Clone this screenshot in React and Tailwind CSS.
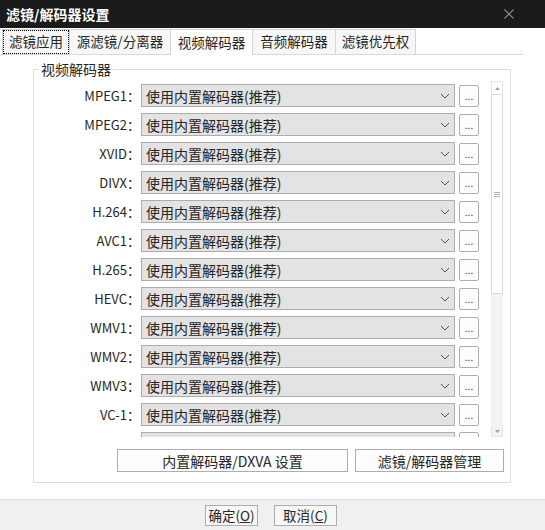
import React from "react";

const codecs = ["MPEG1", "MPEG2", "XVID", "DIVX", "H.264", "AVC1", "H.265", "HEVC", "WMV1", "WMV2", "WMV3", "VC-1"];

const tabs = [
  { label: "滤镜应用", w: "w-[67px]", focus: true },
  { label: "源滤镜/分离器", w: "w-[101px]" },
  { label: "视频解码器", w: "w-[82px]", active: true },
  { label: "音频解码器", w: "w-[83px]" },
  { label: "滤镜优先权", w: "w-[81px]", last: true },
];

function Chevron() {
  return (
    <svg width="10" height="6" viewBox="0 0 10 6">
      <path d="M1 1 L5 5 L9 1" fill="none" stroke="#555" strokeWidth="1" />
    </svg>
  );
}

function Row({ name }) {
  return (
    <div className="flex items-center h-[23px] shrink-0">
      <div className="w-[106px] text-right text-[13px] leading-none">{name}：</div>
      <div className="ml-[1px] w-[314px] h-[23px] bg-[#e3e3e3] border border-[#adadad] flex items-center justify-between pl-[4px] pr-[4px] text-[14px] leading-none">
        <span>使用内置解码器(推荐)</span>
        <Chevron />
      </div>
      <div className="ml-[4px] w-[20px] h-[22px] bg-[#fdfdfd] border border-[#adadad] rounded-[2px] flex items-end justify-center pb-[5px] text-[10px] leading-none text-[#333]">
        ...
      </div>
    </div>
  );
}

function PartialRow() {
  return (
    <div className="flex items-start h-[23px] shrink-0">
      <div className="w-[106px]" />
      <div className="ml-[1px] w-[314px] h-[23px] bg-[#e3e3e3] border border-[#adadad]" />
      <div className="ml-[4px] w-[20px] h-[22px] bg-[#fdfdfd] border border-[#adadad] rounded-[2px]" />
    </div>
  );
}

export default function App() {
  return (
    <div className="w-[545px] h-[530px] bg-white flex flex-col overflow-hidden text-[#262626] font-['Noto_Sans_CJK_SC','Noto_Sans',sans-serif]">
      {/* title bar */}
      <div className="h-[28px] shrink-0 bg-[#1b1b1b] flex items-center justify-between pl-[6px] pr-[31px]">
        <span className="text-white text-[14px] font-bold leading-none">滤镜/解码器设置</span>
        <svg width="10" height="10" viewBox="0 0 10 10">
          <path d="M0.5 0.5 L9.5 9.5 M9.5 0.5 L0.5 9.5" stroke="#8f8f8f" strokeWidth="1.1" />
        </svg>
      </div>

      {/* tabs */}
      <div className="h-[27px] shrink-0 pl-[2px] mr-[22px] flex items-end border-b border-[#d9d9d9]">
        {tabs.map((t) => (
          <div
            key={t.label}
            className={`${t.w} h-[25px] border-t border-l border-[#d5d5d5] ${t.last ? "border-r" : ""} ${
              t.active ? "bg-white h-[26px] -mb-px" : "bg-[#f7f7f7]"
            } flex items-center justify-center text-[13.5px] leading-none`}
          >
            {t.focus ? (
              <span className="w-full h-full border border-dotted border-black flex items-center justify-center">
                {t.label}
              </span>
            ) : (
              t.label
            )}
          </div>
        ))}
      </div>

      {/* content */}
      <div className="flex-1 flex flex-col">
        <div className="mt-[14px] ml-[33px] w-[478px] h-[414px] border border-[#dcdcdc] relative">
          <div className="absolute -top-[10px] left-[5px] px-[2px] bg-white text-[14px] leading-[18px]">视频解码器</div>
          <div className="pt-[11px] flex flex-col">
            <div className="flex h-[356px]">
              <div className="w-[445px] h-full overflow-hidden pt-[3px] flex flex-col gap-[6px]">
                {codecs.map((c) => (
                  <Row key={c} name={c} />
                ))}
                <PartialRow />
              </div>
              <div className="ml-[12px] w-[12px] h-full flex flex-col">
                <div className="h-[13px] flex items-center justify-center border border-[#e4e4e4] border-b-0">
                  <svg width="5" height="3" viewBox="0 0 5 3">
                    <path d="M0 3 L2.5 0 L5 3 Z" fill="#a0a0a0" />
                  </svg>
                </div>
                <div className="h-[200px] border border-[#d8d8d8] bg-white flex items-center justify-center">
                  <svg width="6" height="5" viewBox="0 0 6 5">
                    <path d="M0 0.5 H6 M0 2.5 H6 M0 4.5 H6" stroke="#b0b0b0" strokeWidth="1" />
                  </svg>
                </div>
                <div className="flex-1 bg-[#f3f3f3]" />
                <div className="h-[11px] flex items-center justify-center border border-[#e4e4e4] border-t-0 bg-[#f3f3f3]">
                  <svg width="5" height="3" viewBox="0 0 5 3">
                    <path d="M0 0 L2.5 3 L5 0 Z" fill="#a0a0a0" />
                  </svg>
                </div>
              </div>
            </div>
            <div className="mt-[12px] ml-[83px] flex gap-[7px]">
              <div className="w-[231px] h-[23px] bg-[#fdfdfd] border border-[#adadad] flex items-center justify-center text-[14px] leading-none">
                内置解码器/DXVA 设置
              </div>
              <div className="w-[149px] h-[23px] bg-[#fdfdfd] border border-[#adadad] flex items-center justify-center text-[14px] leading-none">
                滤镜/解码器管理
              </div>
            </div>
          </div>
        </div>
      </div>

      {/* footer */}
      <div className="h-[31px] shrink-0 border-t border-[#dfdfdf] bg-[#f0f0f0] pt-[5px] pl-[205px] flex items-start gap-[16px]">
        <div className="w-[53px] h-[21px] bg-[#f7f7f7] border border-[#adadad] flex items-center justify-center text-[13.5px] leading-none">
          确定(<span className="underline">O</span>)
        </div>
        <div className="w-[63px] h-[21px] bg-[#f7f7f7] border border-[#adadad] flex items-center justify-center text-[13.5px] leading-none">
          取消(<span className="underline">C</span>)
        </div>
      </div>
    </div>
  );
}
